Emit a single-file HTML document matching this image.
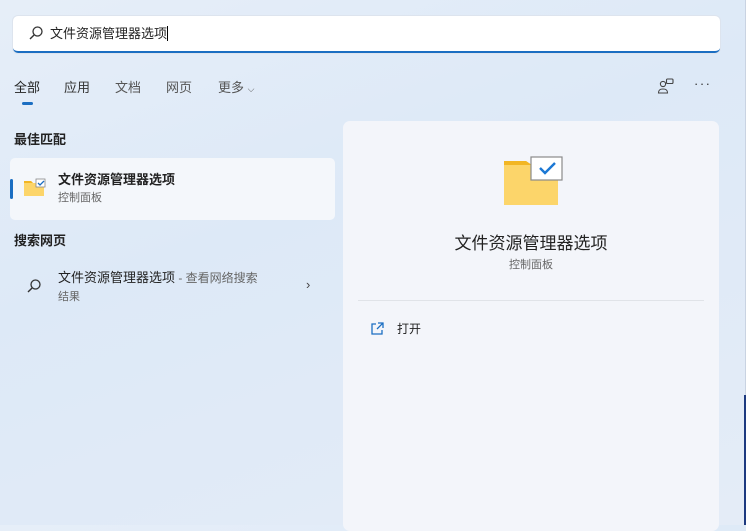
<!DOCTYPE html>
<html><head><meta charset="utf-8"><style>
*{margin:0;padding:0;box-sizing:border-box}
body{width:746px;height:525px;overflow:hidden;position:relative;font-family:"Liberation Sans","Noto Sans CJK SC",sans-serif;color:#1a1a1a;
background:linear-gradient(160deg,#e6eef8 0%,#dde9f7 40%,#e4ecf7 100%)}
.a{position:absolute}
.search{left:13px;top:16px;width:707px;height:37px;background:#fff;border-radius:5px;border-bottom:2px solid #1b6ec2;box-shadow:0 0 0 1px #dde4ee}
.tab{top:77px;font-size:13px;color:#444}
.panel{left:343px;top:121px;width:376px;height:410px;background:#f3f5fa;border-radius:7px}
.card{left:10px;top:158px;width:325px;height:62px;background:#f4f7fb;border-radius:5px}
</style></head><body>
<div class="a" style="left:745px;top:0;width:1px;height:525px;background:#c9d3e2"></div>
<div class="a" style="left:744px;top:395px;width:2px;height:130px;background:#1d3a80"></div>
<div class="a search">
<svg class="a" style="left:15px;top:9px" width="16" height="16" viewBox="0 0 16 16"><circle cx="9.5" cy="6.5" r="4.5" fill="none" stroke="#333" stroke-width="1.3"/><path d="M6.3 9.7L2 14" stroke="#333" stroke-width="1.4"/></svg>
<div class="a" style="left:37px;top:7px;font-size:13px;color:#222">文件资源管理器选项<span style="display:inline-block;width:1px;height:15px;background:#000;vertical-align:-3px"></span></div>
</div>
<div class="a tab" style="left:14px;color:#222">全部</div>
<div class="a" style="left:22px;top:102px;width:11px;height:3px;border-radius:2px;background:#1b6ec2"></div>
<div class="a tab" style="left:64px;color:#333">应用</div>
<div class="a tab" style="left:115px;color:#555">文档</div>
<div class="a tab" style="left:166px;color:#555">网页</div>
<div class="a tab" style="left:218px;color:#555">更多 <span style="font-size:9px">⌵</span></div>
<svg class="a" style="left:657px;top:78px" width="20" height="17" viewBox="0 0 20 17"><circle cx="6" cy="6" r="2.6" fill="none" stroke="#444" stroke-width="1.1"/><path d="M1.5 15c0-3 1.5-4 4.5-4s4.5 1 4.5 4z" fill="none" stroke="#444" stroke-width="1.1"/><rect x="9.5" y="1" width="6.5" height="4.5" rx="1" fill="none" stroke="#444" stroke-width="1.1"/></svg>
<div class="a" style="left:694px;top:76px;font-size:13px;color:#333;letter-spacing:1.5px">···</div>
<div class="a" style="left:14px;top:129px;font-size:13px;font-weight:bold;color:#222">最佳匹配</div>
<div class="a card"></div>
<div class="a" style="left:10px;top:179px;width:3px;height:20px;border-radius:2px;background:#1b6ec2"></div>
<svg class="a" style="left:23px;top:177px" width="24" height="20" viewBox="0 0 24 20"><path d="M1 4h7l2 2h11v13H1z" fill="#fcd56a"/><path d="M1 4h7l2 2H1z" fill="#f2b624"/><rect x="13" y="2" width="9" height="8" fill="#fff" stroke="#888" stroke-width=".8"/><path d="M15 6l2 2 4-4" stroke="#1b6ec2" stroke-width="1.3" fill="none"/></svg>
<div class="a" style="left:58px;top:169px;font-size:13px;font-weight:bold;color:#222">文件资源管理器选项</div>
<div class="a" style="left:58px;top:189px;font-size:11px;color:#666">控制面板</div>
<div class="a" style="left:14px;top:230px;font-size:13px;font-weight:bold;color:#222">搜索网页</div>
<svg class="a" style="left:26px;top:278px" width="16" height="16" viewBox="0 0 16 16"><circle cx="9.5" cy="6.5" r="4.5" fill="none" stroke="#333" stroke-width="1.3"/><path d="M6.3 9.7L2 14" stroke="#333" stroke-width="1.4"/></svg>
<div class="a" style="left:58px;top:267px;font-size:13px;color:#222">文件资源管理器选项<span style="font-size:12px;color:#666"> - 查看网络搜索</span></div>
<div class="a" style="left:58px;top:288px;font-size:11px;color:#666">结果</div>
<div class="a" style="left:306px;top:277px;font-size:13px;color:#444">›</div>
<div class="a panel"></div>
<svg class="a" style="left:503px;top:155px" width="62" height="50" viewBox="0 0 62 50"><path d="M1 6h22l8 6h24v38H1z" fill="#fcd56a"/><path d="M1 6h22l6 4H1z" fill="#f2b624"/><rect x="28" y="2" width="31" height="23" fill="#fff" stroke="#8a8a8a" stroke-width="1.2"/><path d="M37 13l5 5 10-10" stroke="#1b78d4" stroke-width="2.4" fill="none"/></svg>
<div class="a" style="left:343px;width:376px;top:229px;text-align:center;font-size:17px;color:#222">文件资源管理器选项</div>
<div class="a" style="left:343px;width:376px;top:256px;text-align:center;font-size:11px;color:#666">控制面板</div>
<div class="a" style="left:358px;top:300px;width:346px;height:1px;background:#e0e3e8"></div>
<svg class="a" style="left:370px;top:322px" width="14" height="14" viewBox="0 0 14 14"><path d="M6 2H2v10h10V8M8 1h5v5M13 1L7 7" fill="none" stroke="#1b6ec2" stroke-width="1.3"/></svg>
<div class="a" style="left:397px;top:320px;font-size:12px;color:#222">打开</div>
</body></html>
